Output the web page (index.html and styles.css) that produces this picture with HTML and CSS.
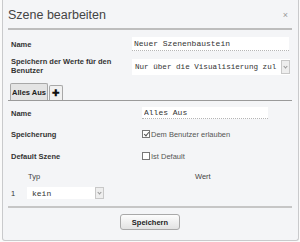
FILE: index.html
```html
<!DOCTYPE html>
<html lang="de">
<head>
    <meta charset="UTF-8">
    <title>Szene bearbeiten</title>
    <link rel="stylesheet" href="styles.css">
</head>
<body>
    <div class="dialog">
        <div class="dialog-title">
            <span>Szene bearbeiten</span>
            <span class="close">&times;</span>
        </div>

        <!-- Kopfdaten der Szene -->
        <div class="form-row row-name">
            <label>Name</label>
            <input class="text-input wide" type="text" value="Neuer Szenenbaustein">
        </div>
        <div class="form-row row-save">
            <label>Speichern der Werte für den Benutzer</label>
            <div class="select wide-select">
                <span>Nur über die Visualisierung zul</span>
                <span class="arrow"></span>
            </div>
        </div>

        <!-- Tabs -->
        <div class="tabs">
            <div class="tab active">Alles Aus</div>
            <div class="tab add">&#10010;</div>
        </div>

        <div class="tab-content">
            <div class="tab-row row-small">
                <label>Name</label>
                <input class="text-input narrow" type="text" value="Alles Aus">
            </div>
            <div class="tab-row">
                <label>Speicherung</label>
                <span class="check"><span class="box checked"></span>Dem Benutzer erlauben</span>
            </div>
            <div class="tab-row">
                <label>Default Szene</label>
                <span class="check"><span class="box"></span>Ist Default</span>
            </div>

            <div class="values-head">
                <span class="col-typ">Typ</span>
                <span class="col-wert">Wert</span>
            </div>
            <div class="values-row">
                <span class="index">1</span>
                <div class="select small-select">
                    <span>kein</span>
                    <span class="arrow"></span>
                </div>
            </div>
        </div>

        <div class="footer">
            <button class="save-btn">Speichern</button>
        </div>
    </div>
</body>
</html>
```

FILE: styles.css
```css
:root {
    --dialog-bg: #f4f5f7;
    --line: #bdbdbd;
    --label: #333;
}

body {
    margin: 0;
    background: #fafafa;
    font-family: 'Liberation Sans', Arial, sans-serif;
    color: var(--label);
}

.dialog {
    box-sizing: border-box;
    width: 297px;
    height: 241px;
    margin-left: 2px;
    padding: 0 6px 0 5px;
    background: var(--dialog-bg);
    border: 1px solid #c9cacc;
    border-top: none;
    border-radius: 0 0 3px 3px;
}

.dialog-title {
    display: flex;
    justify-content: space-between;
    align-items: center;
    height: 27px;
    padding-top: 1px;
    border-bottom: 2px solid var(--line);
    font-size: 12.5px;
    color: #444;
}

.close {
    font-size: 9px;
    color: #999;
    margin-right: 4px;
}

label {
    font-size: 7.5px;
    font-weight: bold;
    color: var(--label);
    padding-left: 3px;
}

.form-row {
    display: grid;
    grid-template-columns: 124px 1fr;
    align-items: center;
}

.row-name {
    height: 14px;
    margin-top: 7px;
}

.row-save {
    height: 17px;
    margin-top: 7px;
}

.row-save label {
    line-height: 8.5px;
    padding-right: 12px;
}

.text-input {
    box-sizing: border-box;
    padding: 0 2px;
    border: none;
    border-bottom: 1px dotted #b5b5b5;
    background: #fff;
    font-family: 'Liberation Mono', 'Courier New', monospace;
    font-size: 8px;
    color: #333;
    outline: none;
}

.wide {
    width: 157px;
    height: 14px;
}

.narrow {
    width: 126px;
    height: 12px;
}

.select {
    box-sizing: border-box;
    display: flex;
    align-items: center;
    justify-content: space-between;
    background: #fff;
    font-family: 'Liberation Mono', 'Courier New', monospace;
    font-size: 8px;
    color: #333;
    padding-left: 3px;
}

.select span:first-child {
    white-space: nowrap;
}

.wide-select {
    width: 158px;
    height: 16px;
    font-size: 7.6px;
}

.small-select {
    width: 77px;
    height: 12px;
    padding-left: 5px;
}

.arrow {
    box-sizing: border-box;
    flex: none;
    width: 9px;
    height: 100%;
    border: 1px solid #c8c8c8;
    background: #eee;
    position: relative;
}

.wide-select .arrow {
    height: 14px;
}

.arrow::after {
    content: "";
    position: absolute;
    left: 2px;
    top: 50%;
    width: 2px;
    height: 2px;
    margin-top: -2px;
    border-right: 1px solid #999;
    border-bottom: 1px solid #999;
    transform: rotate(45deg);
}

.tabs {
    display: flex;
    align-items: flex-end;
    height: 17px;
    margin-top: 8px;
    padding-left: 2px;
    border-bottom: 1px solid #9a9a9a;
}

.tab {
    box-sizing: border-box;
    height: 17px;
    display: flex;
    align-items: center;
    justify-content: center;
    border: 1px solid #a8a8a8;
    border-bottom: none;
    border-radius: 2px 2px 0 0;
    font-size: 7.5px;
    font-weight: bold;
    color: #222;
}

.tab.active {
    width: 38px;
    background: #e4e4e4;
}

.tab.add {
    width: 14px;
    height: 15px;
    margin-left: 1px;
    background: #f1f1f1;
    font-size: 9px;
    color: #111;
}

.tab-row {
    display: grid;
    grid-template-columns: 134px 1fr;
    align-items: center;
    height: 14px;
    margin-top: 8px;
}

.row-small {
    height: 12px;
    margin-top: 6px;
}

.check {
    display: flex;
    align-items: center;
    font-size: 7.5px;
    color: #555;
}

.box {
    box-sizing: border-box;
    width: 8px;
    height: 8px;
    margin-right: 1px;
    border: 1px solid #777;
    background: #fff;
    position: relative;
}

.box.checked::after {
    content: "";
    position: absolute;
    left: 2px;
    top: 0;
    width: 2px;
    height: 4px;
    border-right: 1px solid #555;
    border-bottom: 1px solid #555;
    transform: rotate(40deg);
}

.values-head {
    display: flex;
    height: 12px;
    align-items: center;
    margin-top: 7px;
    font-size: 7.5px;
    color: #444;
}

.col-typ {
    margin-left: 20px;
    width: 167px;
}

.values-row {
    display: flex;
    align-items: center;
    height: 12px;
    margin-top: 5px;
}

.index {
    font-size: 7.5px;
    width: 19px;
    padding-left: 3px;
    box-sizing: border-box;
}

.footer {
    margin-top: 7px;
    border-top: 2px solid #c6c6c6;
    display: flex;
    justify-content: center;
    padding-top: 6px;
}

.save-btn {
    width: 60px;
    height: 16px;
    padding: 0;
    border: 1px solid #a9a9a9;
    border-radius: 3px;
    background: linear-gradient(#fdfdfd, #e2e2e2);
    font-family: 'Liberation Sans', Arial, sans-serif;
    font-size: 7.5px;
    font-weight: bold;
    color: #222;
}
```
